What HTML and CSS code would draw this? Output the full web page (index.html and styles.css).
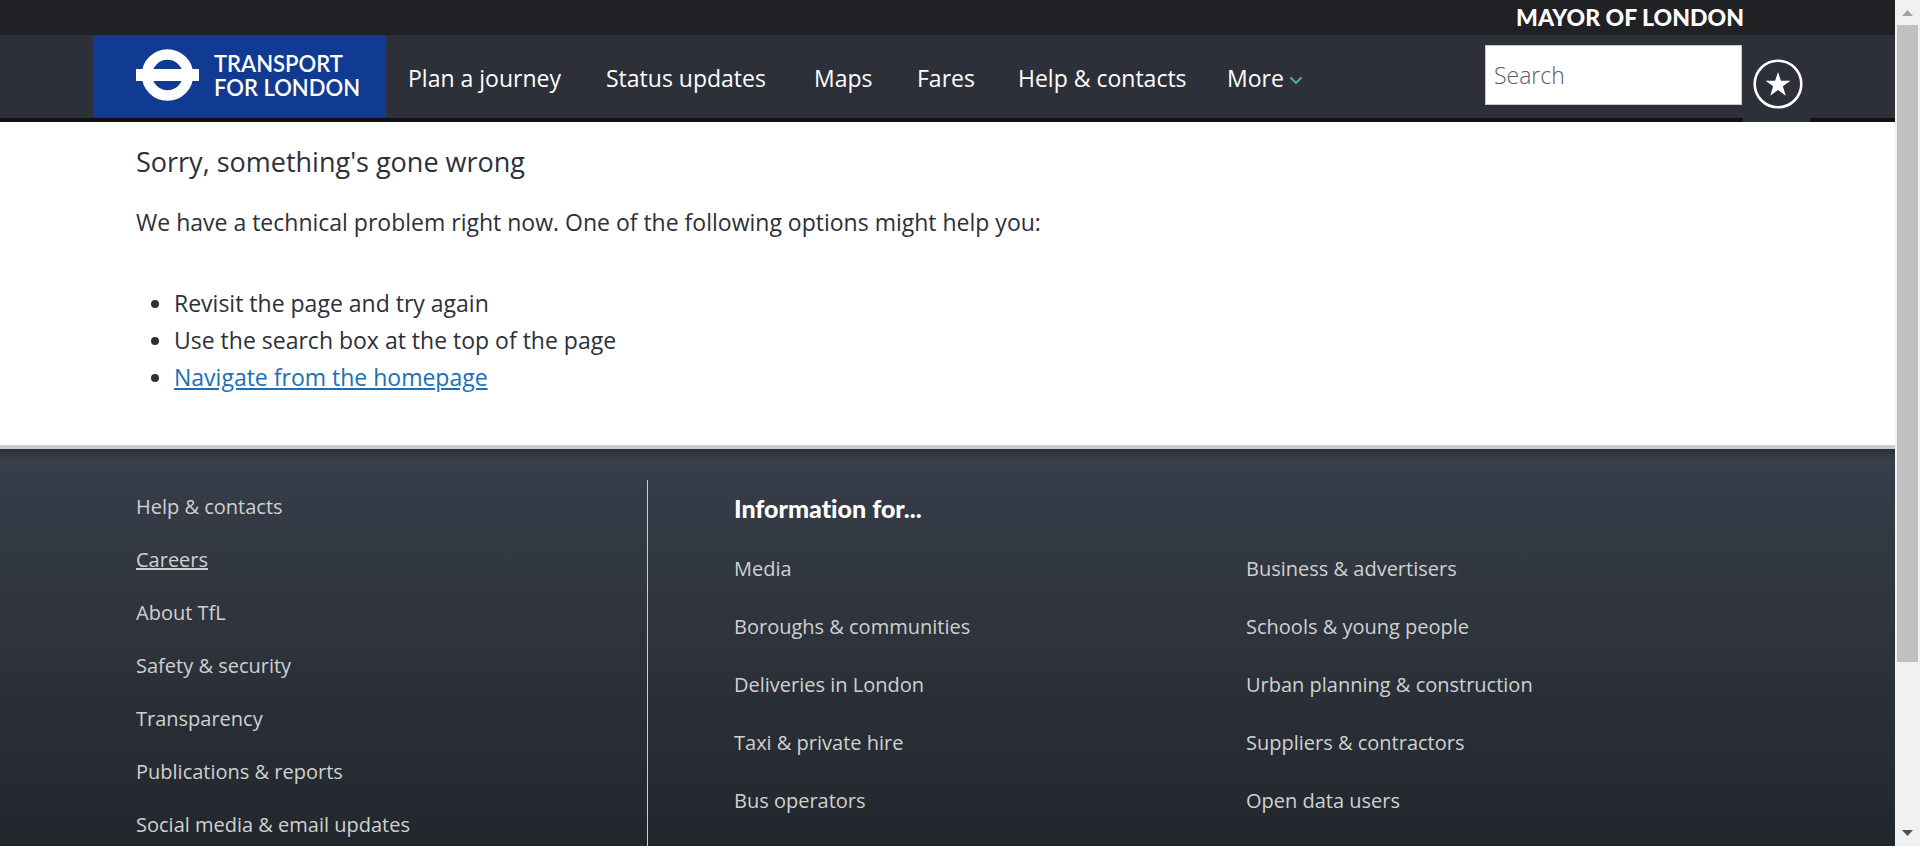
FILE: index.html
```html
<!DOCTYPE html>
<html lang="en">
<head>
<meta charset="utf-8">
<title>Sorry, something's gone wrong - Transport for London</title>
<link rel="stylesheet" href="styles.css">
</head>
<body>
<div class="page">
  <div class="mayor-bar"><span class="mayor">MAYOR OF LONDON</span></div>
  <header class="header">
    <a class="logo" href="#">
      <svg class="roundel" viewBox="0 0 63 52" aria-hidden="true">
        <circle cx="31.5" cy="26" r="20.5" fill="none" stroke="#fff" stroke-width="10.5"/>
        <rect x="0" y="20" width="63" height="12" fill="#fff"/>
      </svg>
      <span>TRANSPORT<br>FOR LONDON</span>
    </a>
    <nav class="nav" aria-label="Main">
      <a href="#">Plan a journey</a>
      <a href="#">Status updates</a>
      <a href="#">Maps</a>
      <a href="#">Fares</a>
      <a href="#">Help &amp; contacts</a>
      <a class="more" href="#">More
        <svg class="chevron" viewBox="0 0 14 10" aria-hidden="true"><path d="M1.5 1.5 7 7 12.500 1.500" fill="none" stroke="#4fb5b5" stroke-width="1.800"/></svg>
      </a>
    </nav>
    <form class="search">
      <input class="search-box" type="search" placeholder="Search" aria-label="Search">
    </form>
    <button class="favourites" type="button" aria-label="Favourites">
      <svg class="star" viewBox="0 0 50 50" aria-hidden="true">
        <circle cx="25" cy="25" r="23.300" fill="none" stroke="#fff" stroke-width="2.600"/>
        <path d="M25 13 27.900 21.700H37.500L29.800 27.300 32.800 36.700 25 31 17.200 36.700 20.200 27.300 12.500 21.700H22.100Z" fill="#fff"/>
      </svg>
    </button>
  </header>
  <main class="main">
    <h1>Sorry, something's gone wrong</h1>
    <p>We have a technical problem right now. One of the following options might help you:</p>
    <ul>
      <li>Revisit the page and try again</li>
      <li>Use the search box at the top of the page</li>
      <li><a href="#">Navigate from the homepage</a></li>
    </ul>
  </main>
  <footer class="footer">
    <ul class="primary-links">
      <li><a href="#">Help &amp; contacts</a></li>
      <li><a class="underlined" href="#">Careers</a></li>
      <li><a href="#">About TfL</a></li>
      <li><a href="#">Safety &amp; security</a></li>
      <li><a href="#">Transparency</a></li>
      <li><a href="#">Publications &amp; reports</a></li>
      <li><a href="#">Social media &amp; email updates</a></li>
    </ul>
    <section class="info">
      <h2>Information for...</h2>
      <ul class="info-links">
        <li><a href="#">Media</a></li>
        <li><a href="#">Business &amp; advertisers</a></li>
        <li><a href="#">Boroughs &amp; communities</a></li>
        <li><a href="#">Schools &amp; young people</a></li>
        <li><a href="#">Deliveries in London</a></li>
        <li><a href="#">Urban planning &amp; construction</a></li>
        <li><a href="#">Taxi &amp; private hire</a></li>
        <li><a href="#">Suppliers &amp; contractors</a></li>
        <li><a href="#">Bus operators</a></li>
        <li><a href="#">Open data users</a></li>
      </ul>
    </section>
  </footer>
</div>
<div class="scrollbar" aria-hidden="true">
  <svg class="arrow" viewBox="0 0 11 6"><path d="M0 6 5.500 0 11 6Z" fill="#a3a3a3"/></svg>
  <div class="track"><div class="thumb"></div></div>
  <svg class="arrow" viewBox="0 0 11 6"><path d="M0 0 5.500 6 11 0Z" fill="#505050"/></svg>
</div>
</body>
</html>
```
FILE: styles.css
```css
* {
  box-sizing: border-box;
}

body {
  margin: 0;
  display: grid;
  grid-template-columns: minmax(0, 1fr) 25px;
  min-height: 100vh;
  background: #fff;
  color: #2d3039;
  font-family: "Open Sans", Lato, sans-serif;
  font-size: 23px;
  font-variant-ligatures: none;
}

ul {
  margin: 0;
  padding: 0;
  list-style: none;
}

.page {
  display: flex;
  flex-direction: column;
}

/* Header */
.mayor-bar {
  height: 35px;
  padding-right: 151px;
  background: #202125;
  color: #fff;
  font-family: Lato, sans-serif;
  font-size: 23px;
  font-weight: 900;
  line-height: 35px;
  text-align: right;
}

.header {
  display: flex;
  align-items: flex-start;
  height: 87px;
  padding: 0 85px 0 93px;
  background: #2d3039;
  border-bottom: 4px solid #111214;
}

.logo {
  display: flex;
  gap: 15px;
  width: 293px;
  height: 82px;
  padding: 14px 0 0 43px;
  background: #113b92;
  color: #fff;
  font-family: Lato, sans-serif;
  font-size: 22px;
  font-weight: 600;
  line-height: 24px;
  text-decoration: none;
}

.logo span {
  padding-top: 3px;
}

.roundel {
  width: 63px;
  height: 52px;
}

.nav {
  display: grid;
  grid-template-columns: 198px 208px 103px 101px 209px auto;
  padding: 27px 0 0 22px;
  line-height: 32px;
  white-space: nowrap;
}

.nav a {
  color: #fff;
  text-decoration: none;
}

.more {
  display: flex;
  gap: 5px;
}

.chevron {
  width: 14px;
  height: 10px;
  margin-top: 14px;
}

.search {
  margin: 10px 1px 0 auto;
}

.search-box {
  display: block;
  width: 257px;
  height: 60px;
  padding: 0 8px;
  border: 1px solid #c9cbcb;
  border-radius: 0;
  background: #fff;
  font: inherit;
  font-weight: 300;
  appearance: none;
}

.search-box::placeholder {
  color: #5c5c5c;
}

.favourites {
  width: 67px;
  height: 87px;
  padding: 11px 0 0 10px;
  border: 0;
  background: #2d3039;
  text-align: left;
}

.star {
  display: block;
  width: 50px;
  height: 50px;
}

/* Main content */
.main {
  padding: 22px 136px 49px;
}

.main h1 {
  margin: 0 0 24px;
  font-size: 27px;
  font-weight: 400;
  line-height: 36px;
}

.main p {
  margin: 0 0 44px;
  line-height: 37px;
}

.main ul {
  padding-left: 38px;
  list-style: disc;
  line-height: 37px;
}

.main a {
  color: #1c6fb5;
}

/* Footer */
.footer {
  display: grid;
  flex: 1;
  grid-template-columns: 512px minmax(0, 1fr);
  align-items: stretch;
  padding: 31px 136px 0;
  border-top: 4px solid #cccdcd;
  background:
    linear-gradient(rgba(0, 0, 0, 0.25), transparent 10px),
    linear-gradient(#383e4a, #22262c);
  font-size: 20px;
}

.footer a {
  color: #cfd1d1;
  text-decoration: none;
}

.footer .underlined {
  text-decoration: underline;
}

.primary-links {
  border-right: 1px solid #cccdcd;
  line-height: 53px;
}

.info {
  padding-left: 86px;
}

.info h2 {
  margin: 10px 0 14px;
  color: #fff;
  font-family: Lato, sans-serif;
  font-size: 25px;
  font-weight: 900;
  line-height: 36px;
}

.info-links {
  display: grid;
  grid-template-columns: 512px auto;
  line-height: 58px;
}

/* Scrollbar */
.scrollbar {
  position: sticky;
  top: 0;
  display: flex;
  flex-direction: column;
  align-items: center;
  height: 100vh;
  padding: 10px 2px;
  background: #f1f1f1;
}

.arrow {
  width: 11px;
  height: 6px;
}

.track {
  flex: 1;
  align-self: stretch;
  padding: 9px 2px 9px 0;
}

.thumb {
  width: 21px;
  height: 80%;
  background: #c1c1c1;
}
```
